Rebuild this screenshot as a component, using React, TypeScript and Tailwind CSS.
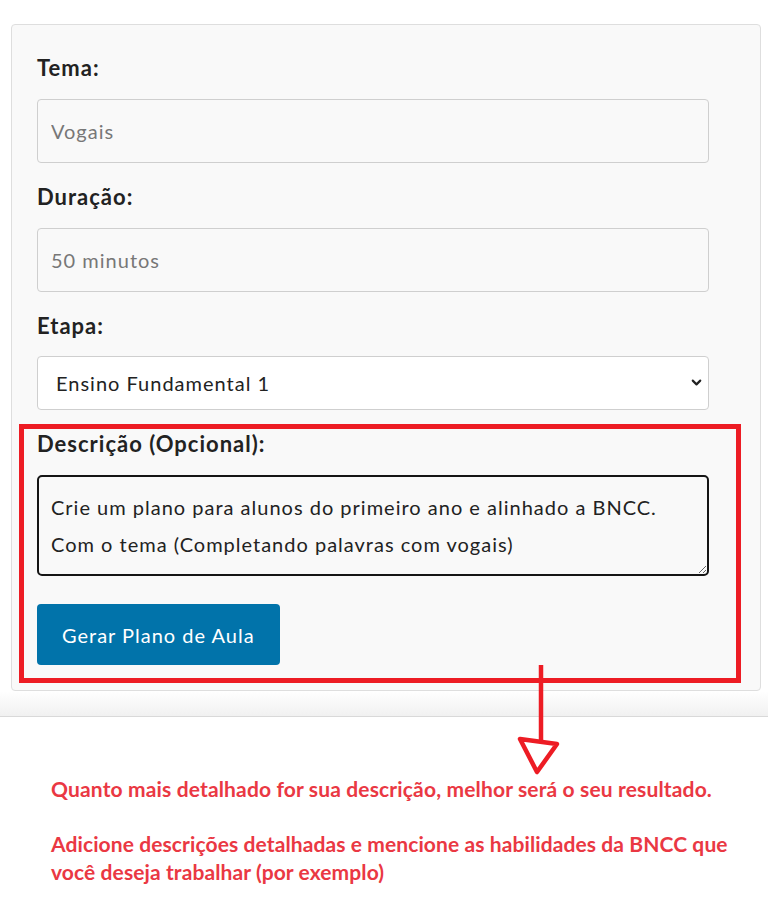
import { ChevronDown } from 'lucide-react'

const labelCls = 'block text-[22px] leading-[30px] font-bold tracking-[1px] text-[#222]'
const font = { fontFamily: 'Lato, "Noto Sans", sans-serif' }

function Field({ label, value }: { label: string; value: string }) {
  return (
    <div className="mb-[19px]">
      <label className={`${labelCls} mb-[16px]`}>{label}</label>
      <input
        readOnly
        placeholder={value}
        className="block h-[64px] w-full rounded-[4px] border border-[#cfcfcf] bg-[#f9f9f9] px-[13px] text-[20px] tracking-[1px] text-[#222] outline-none placeholder:text-[#777]"
      />
    </div>
  )
}

export default function App() {
  return (
    <div className="relative min-h-[918px] w-full bg-white" style={font}>
      <div className="pl-[11px] pt-[24px]">
        <div className="w-[750px] rounded-[4px] border border-[#dedede] bg-[#f9f9f9] pb-[7px] pl-[25px] pr-[51px] pt-[28px]">
          <Field label="Tema:" value="Vogais" />
          <Field label="Duração:" value="50 minutos" />

          <div>
            <label className={`${labelCls} mb-[15px]`}>Etapa:</label>
            <div className="relative">
              <select
                defaultValue="ef1"
                className="block h-[54px] w-full appearance-none rounded-[4px] border border-[#cfcfcf] bg-white pl-[18px] text-[20px] tracking-[1px] text-[#222] outline-none"
              >
                <option value="ef1">Ensino Fundamental 1</option>
              </select>
              <ChevronDown
                size={15}
                strokeWidth={3.4}
                className="pointer-events-none absolute right-[5px] top-[19px] text-[#222]"
              />
            </div>
          </div>

          <div className="-ml-[18px] -mr-[32px] mt-[14px] border-[5px] border-[#ed1c24] pb-[13px] pl-[13px] pr-[27px]">
            <label className={`${labelCls} mb-[16px]`}>Descrição (Opcional):</label>
            <textarea
              readOnly
              defaultValue={
                'Crie um plano para alunos do primeiro ano e alinhado a BNCC.\nCom o tema (Completando palavras com vogais)'
              }
              className="block h-[101px] w-full rounded-[5px] border-2 border-[#151515] bg-[#f9f9f9] px-[12px] pt-[12px] text-[20px] leading-[37px] tracking-[1px] text-[#222] outline-none"
            />
            <button className="mt-[28px] h-[61px] rounded-[4px] bg-[#0173aa] px-[25px] text-[20px] tracking-[1px] text-white">
              Gerar Plano de Aula
            </button>
          </div>
        </div>
      </div>

      <div className="h-[26px] border-b border-[#d9d9d9] bg-linear-to-b from-white to-[#f1f1f1]" />

      <div className="pl-[51px] pt-[58px] text-[21px] font-bold leading-[28px] tracking-[0.1px] text-[#ea3843]">
        <p className="mb-[27px] tracking-[0.15px]">
          Quanto mais detalhado for sua descrição, melhor será o seu resultado.
        </p>
        <p>
          Adicione descrições detalhadas e mencione as habilidades da BNCC que
          <br />
          você deseja trabalhar (por exemplo)
        </p>
      </div>

      <svg
        className="pointer-events-none absolute left-0 top-0"
        width="768"
        height="918"
        fill="none"
        stroke="#ed1c24"
        strokeWidth="4.5"
        strokeLinejoin="round"
      >
        <line x1="541" y1="665" x2="541" y2="742" />
        <polygon points="520,739 557,744 537,772" />
      </svg>
    </div>
  )
}
